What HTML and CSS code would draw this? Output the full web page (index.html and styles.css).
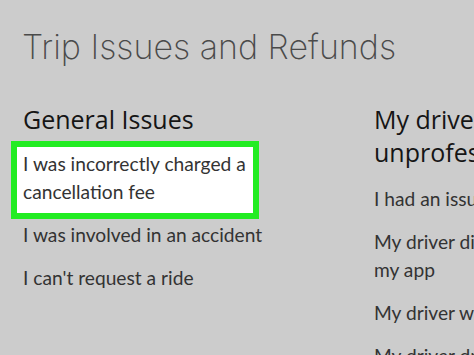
FILE: index.html
```html
<!DOCTYPE html>
<html>
<head>
<meta charset="utf-8">
<link rel="stylesheet" href="styles.css">
</head>
<body>
<div class="page">
  <h1 class="title">Trip Issues and Refunds</h1>
  <div class="columns">
    <section class="col col-left">
      <h2 class="col-head">General Issues</h2>
      <ul class="issues">
        <li class="issue highlighted">I was incorrectly charged a cancellation fee</li>
        <li class="issue after-highlight">I was involved in an accident</li>
        <li class="issue">I can't request a ride</li>
      </ul>
    </section>
    <section class="col col-right">
      <h2 class="col-head">My driver was unprofessional</h2>
      <ul class="issues">
        <li class="issue">I had an issue with my driver</li>
        <li class="issue">My driver didn't match<br>my app</li>
        <li class="issue">My driver was rude</li>
        <li class="issue">My driver drove dangerously</li>
      </ul>
    </section>
  </div>
</div>
</body>
</html>
```
FILE: styles.css
```css
html, body {
  margin: 0;
  padding: 0;
  background: #cccccc;
}
body {
  width: 474px;
  height: 355px;
  overflow: hidden;
}
.page {
  width: 474px;
  height: 355px;
  padding: 24px 0 0 23px;
  box-sizing: border-box;
  overflow: hidden;
}
.title {
  margin: 0;
  margin-left: -1px;
  font-family: Inter, "Open Sans", sans-serif;
  font-size: 34px;
  font-weight: 200;
  line-height: 46px;
  color: #4a4a4a;
  white-space: nowrap;
}
.columns {
  display: flex;
  margin-top: 33px;
}
.col-left {
  width: 351px;
  flex: none;
}
.col-right {
  width: 240px;
  flex: none;
}
.col-head {
  margin: 0;
  font-family: "Open Sans", sans-serif;
  font-size: 25px;
  font-weight: 400;
  line-height: 33px;
  color: #151515;
}
.issues {
  list-style: none;
  margin: 0;
  padding: 0;
}
.issue {
  font-family: Lato, sans-serif;
  font-size: 19.2px;
  line-height: 28px;
  margin-top: 15px;
  color: #333333;
}
.col-left .issue.highlighted {
  width: 228px;
  margin-top: 5px;
  margin-left: -12px;
  padding: 3px 2px 7px 6px;
  background: #ffffff;
  border: 6px solid #22ec22;
}
.col-left .issue.after-highlight {
  margin-top: 2px;
}
.col-right .issues .issue:first-child {
  margin-top: 15.5px;
}
```
